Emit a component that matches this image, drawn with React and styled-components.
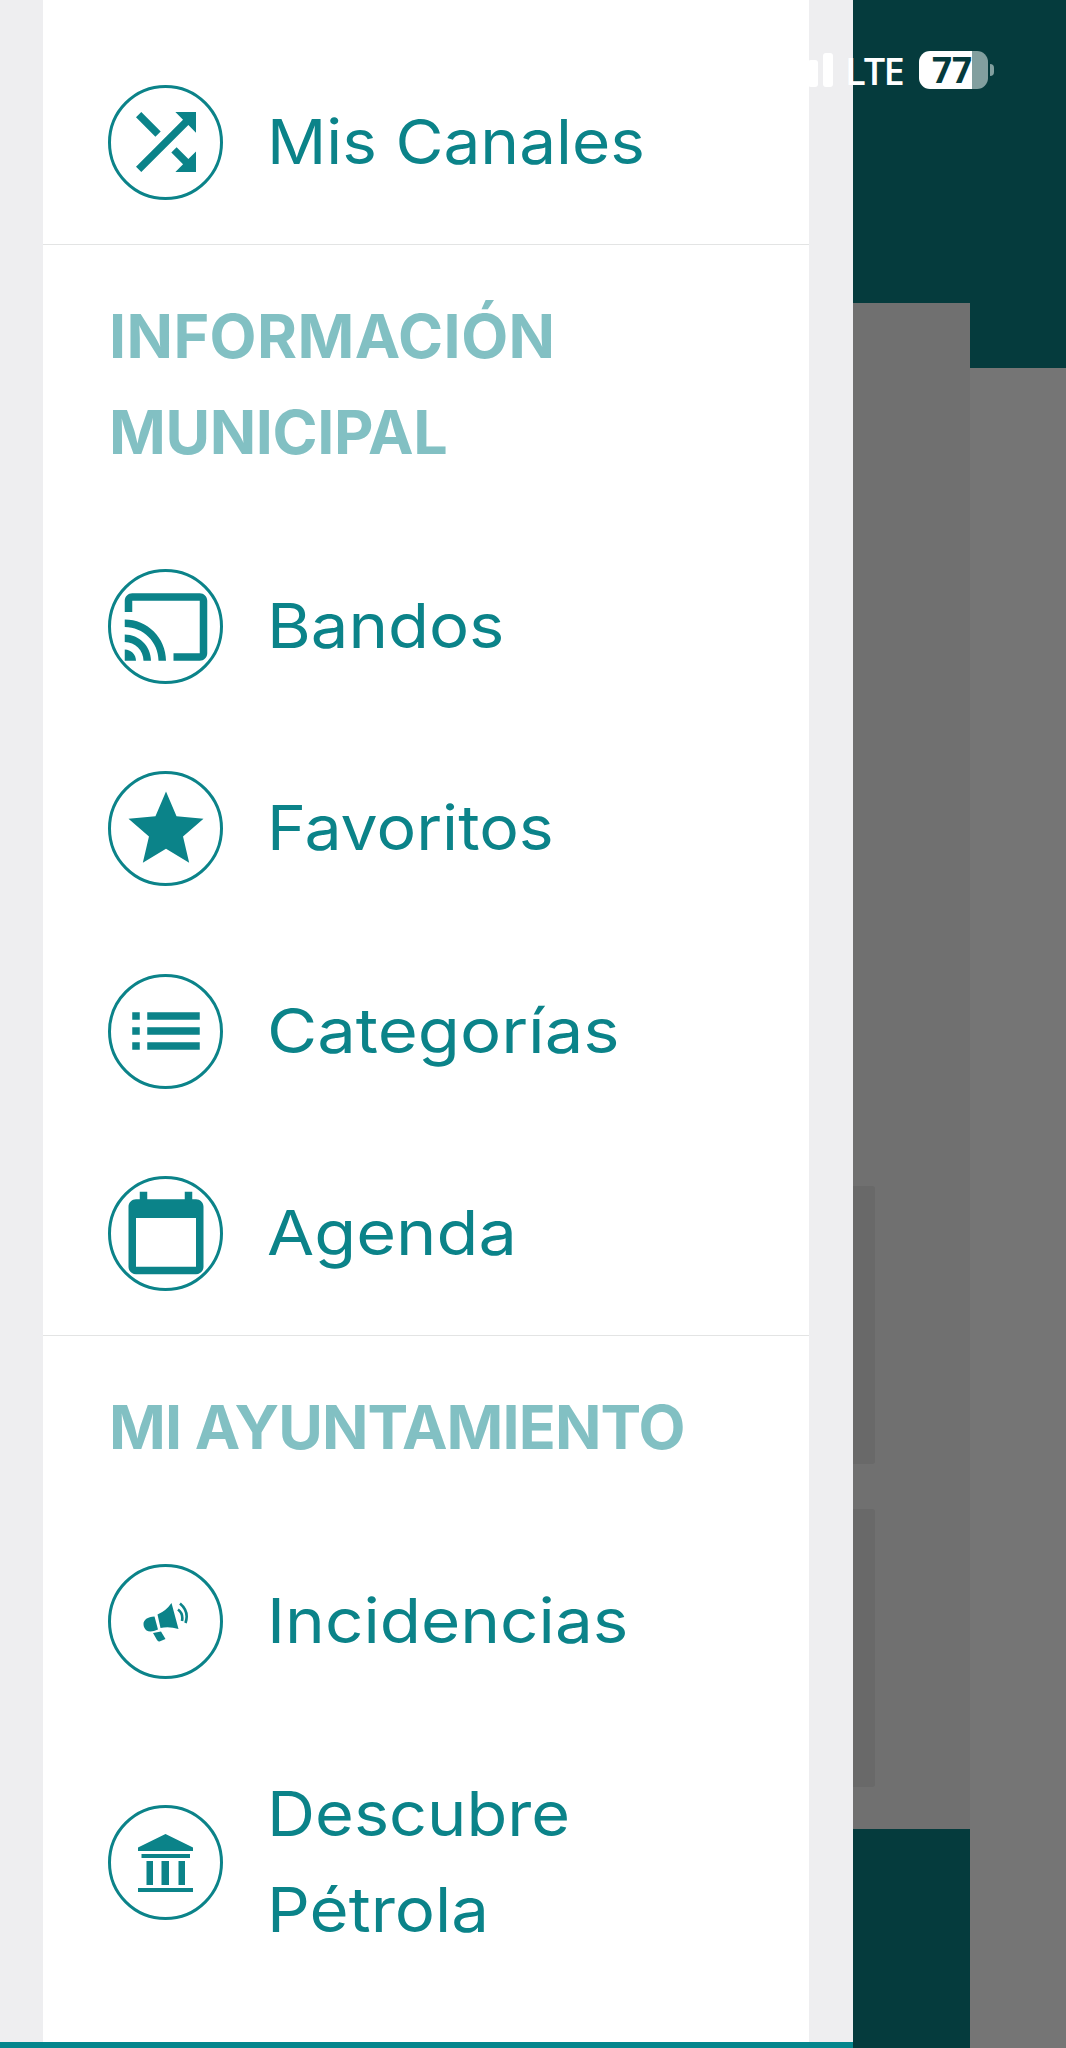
import React from 'react';
import styled, { createGlobalStyle } from 'styled-components';

const colors = {
  teal: '#0b8389',
  tealSoft: '#82c0c3',
  tealDark: '#053b3d',
  gutter: '#eeeef0',
  line: '#e3e4e4',
  page: '#757575',
  panel: '#707070',
  card: '#696969',
};

const GlobalStyle = createGlobalStyle`
  body {
    margin: 0;
    font-family: Inter, 'Liberation Sans', sans-serif;
  }
`;

const Screen = styled.div`
  position: relative;
  display: flex;
  width: 1066px;
  height: 2048px;
  overflow: hidden;
  background: ${colors.page};
`;

const Drawer = styled.aside`
  display: flex;
  flex-direction: column;
  box-sizing: border-box;
  width: 853px;
  border-bottom: 6px solid #04858c;
  background: ${colors.gutter};
`;

const Menu = styled.nav`
  flex: 1;
  margin: 0 44px 0 43px;
  background: #fff;
`;

const Section = styled.section`
  box-sizing: border-box;
  height: ${({ $height }) => $height}px;
  padding: ${({ $top }) => $top}px 65px 0;
  border-bottom: ${({ $last }) => ($last ? '0' : `1px solid ${colors.line}`)};
`;

const Title = styled.h2`
  margin: 0 0 89.5px;
  padding-left: 1px;
  color: ${colors.tealSoft};
  font-size: 61px;
  font-weight: 700;
  line-height: 96px;
  text-transform: uppercase;
`;

const TitleLine = styled.span`
  display: block;
  white-space: nowrap;
  letter-spacing: ${({ $tracking }) => $tracking || 0}px;
`;

const Item = styled.a`
  display: flex;
  align-items: center;
  gap: 44px;
  min-height: 115px;
  margin-bottom: 87.3px;
  color: ${colors.teal};
`;

const Circle = styled.span`
  display: flex;
  flex: none;
  align-items: center;
  justify-content: center;
  box-sizing: border-box;
  width: 115px;
  height: 115px;
  border: 3px solid ${colors.teal};
  border-radius: 50%;

  svg {
    flex: none;
    fill: currentColor;
  }
`;

const Label = styled.span`
  padding-bottom: 1px;
  font-size: 62px;
  line-height: 96px;
`;

const LabelLine = styled.span`
  display: block;
  white-space: nowrap;
  transform: scaleX(${({ $stretch }) => $stretch});
  transform-origin: left;
`;

const Backdrop = styled.div`
  display: flex;
  flex: 1;
`;

const Panel = styled.div`
  display: flex;
  flex-direction: column;
  box-sizing: border-box;
  width: 117px;
  border-top: 303px solid ${colors.tealDark};
  border-bottom: 219px solid ${colors.tealDark};
  padding-top: 883px;
  gap: 45px;
  background: ${colors.panel};
`;

const Card = styled.div`
  width: 22px;
  height: 278px;
  border-radius: 0 3px 3px 0;
  background: ${colors.card};
`;

const Header = styled.div`
  flex: 1;
  height: 368px;
  background: ${colors.tealDark};
`;

const StatusBar = styled.div`
  position: absolute;
  top: 51px;
  left: 808px;
  display: flex;
  align-items: center;
  height: 38px;
  color: #fff;
  font-family: 'Open Sans', 'Noto Sans', sans-serif;
`;

const Signal = styled.div`
  display: flex;
  align-items: flex-end;
  gap: 5px;
  width: 37px;
  height: 34px;
`;

const Bar = styled.span`
  width: 10px;
  height: ${({ $height }) => $height}px;
  border-radius: 3px;
  background: #fff;
`;

const Network = styled.span`
  width: 74px;
  font-size: 38px;
  font-weight: 600;
  line-height: 38px;
  letter-spacing: -1.8px;
`;

const Battery = styled.span`
  box-sizing: border-box;
  width: 69px;
  height: 38px;
  padding-left: 13px;
  border-radius: 11px;
  background: linear-gradient(90deg, #fff 53px, #829f9f 53px);
  color: ${colors.tealDark};
  font-size: 35px;
  font-weight: 700;
  line-height: 37px;
`;

const Nub = styled.span`
  width: 4px;
  height: 12px;
  margin-left: 2px;
  border-radius: 0 4px 4px 0;
  background: #829f9f;
`;

const ShuffleIcon = () => (
  <svg width="90" height="90" viewBox="0 0 24 24">
    <path d="M10.59 9.17 5.41 4 4 5.41l5.17 5.17 1.42-1.41zM14.5 4l2.04 2.04L4 18.59 5.41 20 17.96 7.46 20 9.5V4h-5.5zm.33 9.41-1.41 1.41 3.13 3.13L14.5 20H20v-5.5l-2.04 2.04-3.13-3.13z" />
  </svg>
);

const CastIcon = () => (
  <svg width="90" height="90" viewBox="0 0 24 24">
    <path d="M21 3H3c-1.1 0-2 .9-2 2v3h2V5h18v14h-7v2h7c1.1 0 2-.9 2-2V5c0-1.1-.9-2-2-2zM1 18v3h3c0-1.66-1.34-3-3-3zm0-4v2c2.76 0 5 2.24 5 5h2c0-3.87-3.13-7-7-7zm0-4v2c4.97 0 9 4.03 9 9h2c0-6.08-4.93-11-11-11z" />
  </svg>
);

const StarIcon = () => (
  <svg width="90" height="90" viewBox="0 0 24 24">
    <path d="M12 17.27 18.18 21l-1.64-7.03L22 9.24l-7.19-.61L12 2 9.19 8.63 2 9.24l5.46 4.73L5.82 21z" />
  </svg>
);

const ListIcon = () => (
  <svg width="90" height="90" viewBox="0 0 24 24">
    <path d="M3 13h2v-2H3v2zm0 4h2v-2H3v2zm0-8h2V7H3v2zm4 4h14v-2H7v2zm0 4h14v-2H7v2zM7 7v2h14V7H7z" />
  </svg>
);

const CalendarIcon = () => (
  <svg width="90" height="90" viewBox="0 0 24 24">
    <path d="M20 3h-1V1h-2v2H7V1H5v2H4c-1.1 0-2 .9-2 2v16c0 1.1.9 2 2 2h16c1.1 0 2-.9 2-2V5c0-1.1-.9-2-2-2zm0 18H4V8h16v13z" />
  </svg>
);

const MegaphoneIcon = () => (
  <svg width="46" height="40" viewBox="0 0 46 40">
    <path d="M14.500 12.500Q23 9 28.500 1L35.500 27Q26 24 17.500 26zM11.500 14.500l3.500 13q-11 5-14-2.500c-2-6 2-10 10.500-10.500zM10 31l8-1.500 4.500 7.500-6 2.500q-1.500 0-2.500-1.500z" />
    <path
      d="M35 7.500q5.500 4 4 11.500M37 1.500q9.500 8 5.500 19.500"
      fill="none"
      stroke="currentColor"
      strokeWidth="2.600"
    />
  </svg>
);

const BankIcon = () => (
  <svg width="55" height="58" viewBox="0 0 55 58">
    <path d="M27.500 0 55 13.500V17H0v-3.500zM3.500 20H52v4H3.500zM8.500 27H15v24H8.500zM23.500 27H31v24h-7.500zM40.500 27H47v24h-6.500zM0 54h55v4H0z" />
  </svg>
);

const MenuItem = ({ icon, lines }) => (
  <Item>
    <Circle>{icon}</Circle>
    <Label>
      {lines.map(([text, stretch]) => (
        <LabelLine key={text} $stretch={stretch}>
          {text}
        </LabelLine>
      ))}
    </Label>
  </Item>
);

const App = () => (
  <Screen>
    <GlobalStyle />

    <Drawer>
      <Menu>
        <Section $height={245} $top={84.5}>
          <MenuItem icon={<ShuffleIcon />} lines={[['Mis Canales', 1.06]]} />
        </Section>

        <Section $height={1091} $top={42.5}>
          <Title>
            <TitleLine $tracking={0.4}>Información</TitleLine>
            <TitleLine $tracking={-0.4}>Municipal</TitleLine>
          </Title>
          <MenuItem icon={<CastIcon />} lines={[['Bandos', 1.08]]} />
          <MenuItem icon={<StarIcon />} lines={[['Favoritos', 1.067]]} />
          <MenuItem icon={<ListIcon />} lines={[['Categorías', 1.109]]} />
          <MenuItem icon={<CalendarIcon />} lines={[['Agenda', 1.104]]} />
        </Section>

        <Section $height={706} $top={42.5} $last>
          <Title>
            <TitleLine $tracking={-0.9}>Mi Ayuntamiento</TitleLine>
          </Title>
          <MenuItem icon={<MegaphoneIcon />} lines={[['Incidencias', 1.087]]} />
          <MenuItem
            icon={<BankIcon />}
            lines={[
              ['Descubre', 1.074],
              ['Pétrola', 1.083],
            ]}
          />
        </Section>
      </Menu>
    </Drawer>

    <Backdrop>
      <Panel>
        <Card />
        <Card />
      </Panel>
      <Header />
    </Backdrop>

    <StatusBar>
      <Signal>
        <Bar $height={27} />
        <Bar $height={34} />
      </Signal>
      <Network>LTE</Network>
      <Battery>77</Battery>
      <Nub />
    </StatusBar>
  </Screen>
);

export default App;
